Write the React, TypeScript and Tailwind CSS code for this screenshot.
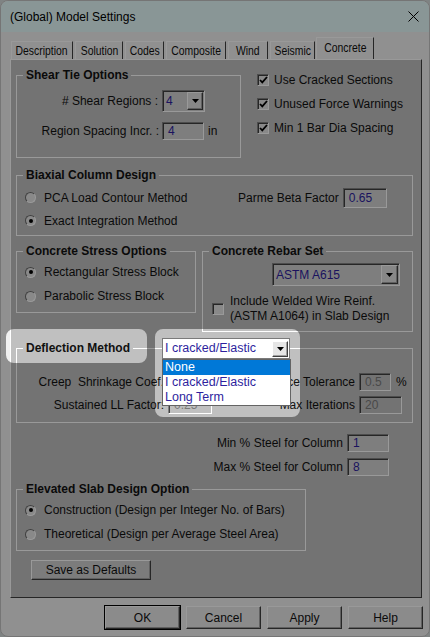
import React from "react";

const BLUE = "text-[#2e1f9e]";
const SUNKEN =
  "border border-t-[#808080] border-l-[#808080] border-r-white border-b-white shadow-[inset_1px_1px_0_#404040]";
const RAISED =
  "border border-t-white border-l-white border-r-[#404040] border-b-[#404040] shadow-[inset_-1px_-1px_0_#a0a0a0]";

const TABS = [
  { label: "Description", w: "w-[62px]" },
  { label: "Solution", w: "w-[48px]" },
  { label: "Codes", w: "w-[39px]" },
  { label: "Composite", w: "w-[60px]" },
  { label: "Wind", w: "w-[40px]" },
  { label: "Seismic", w: "w-[45px]" },
];

// rounded rect for the spotlight holes
const rr = (x: number, y: number, w: number, h: number, r: number) =>
  `M${x + r} ${y}H${x + w - r}A${r} ${r} 0 0 1 ${x + w} ${y + r}V${y + h - r}A${r} ${r} 0 0 1 ${x + w - r} ${y + h}H${x + r}A${r} ${r} 0 0 1 ${x} ${y + h - r}V${y + r}A${r} ${r} 0 0 1 ${x + r} ${y}Z`;

const Caret = () => (
  <svg width="7" height="4" viewBox="0 0 7 4">
    <path d="M0 0h7L3.5 4z" fill="#000" />
  </svg>
);

const Group = ({
  title,
  className = "",
  children,
}: {
  title: string;
  className?: string;
  children: React.ReactNode;
}) => (
  <fieldset className={`border border-white ${className}`}>
    <legend className="ml-[6px] px-[3px] text-[12px] font-bold leading-[14px]">{title}</legend>
    {children}
  </fieldset>
);

const Field = ({
  value,
  className = "",
  dim,
}: {
  value: string;
  className?: string;
  dim?: boolean;
}) => (
  <div
    className={`flex items-center pl-[5px] ${SUNKEN} ${
      dim ? "bg-[#c0c0c0] text-[#7a7a7a]" : `bg-[#d2d2d2] ${BLUE}`
    } ${className}`}
  >
    {value}
  </div>
);

const Check = ({ checked }: { checked?: boolean }) => (
  <span className={`flex h-[12px] w-[12px] shrink-0 items-center justify-center bg-[#e4e4e4] ${SUNKEN}`}>
    {checked && (
      <svg width="9" height="8" viewBox="0 0 9 8">
        <path d="M1 4l2.3 2.4L8 1" fill="none" stroke="#000" strokeWidth="1.8" />
      </svg>
    )}
  </span>
);

const RadioRow = ({
  label,
  checked,
  h = "h-[24px]",
}: {
  label: string;
  checked?: boolean;
  h?: string;
}) => (
  <div className={`flex items-center pl-[8px] ${h}`}>
    <span className="flex h-[11px] w-[11px] shrink-0 items-center justify-center rounded-full border border-t-[#6a6a6a] border-l-[#6a6a6a] border-r-white border-b-white bg-[#e4e4e4]">
      {checked && <span className="h-[4px] w-[4px] rounded-full bg-black" />}
    </span>
    <span className="ml-[8px] whitespace-nowrap">{label}</span>
  </div>
);

const CheckRow = ({ label }: { label: string }) => (
  <div className="flex h-[24px] items-center">
    <Check checked />
    <span className="ml-[5px] whitespace-nowrap">{label}</span>
  </div>
);

export default function App() {
  const holes = `M0 0H430V637H0Z${rr(6, 329, 141, 34, 8)}${rr(155, 329, 145, 88, 8)}`;

  return (
    <div className="relative h-[637px] w-[430px] overflow-hidden bg-[#d4dada] font-['Liberation_Sans',Arial,sans-serif] text-[12px] text-[#111]">
      <div className="flex h-full flex-col overflow-hidden rounded-[8px] border border-[#c4c4c4] bg-[#f0f0f0]">
        {/* title bar */}
        <div className="flex h-[31px] shrink-0 items-center justify-between bg-[#e5fbfb] pl-[9px] pr-[10px]">
          <span className="text-[12px] text-black">(Global) Model Settings</span>
          <svg width="11" height="11" viewBox="0 0 11 11">
            <path d="M0.5 0.5L10.5 10.5M10.5 0.5L0.5 10.5" stroke="#000" strokeWidth="1" />
          </svg>
        </div>

        {/* tabs */}
        <div className="mt-[5px] flex h-[22px] shrink-0 items-end gap-[2px] pl-[10px]">
          {TABS.map((t) => (
            <div
              key={t.label}
              className={`${t.w} flex h-[18px] items-center justify-center border-l border-t border-r border-l-white border-t-white border-r-[#404040] bg-[#f0f0f0]`}
            >
              <span className="inline-block scale-x-[0.8] whitespace-nowrap text-[13px]">{t.label}</span>
            </div>
          ))}
          <div className="relative -ml-[1px] flex h-[22px] w-[58px] items-center justify-center border-l border-t border-r border-l-white border-t-white border-r-[#404040] bg-[#f0f0f0] pb-[2px]">
            <span className="inline-block scale-x-[0.8] whitespace-nowrap text-[13px]">Concrete</span>
          </div>
        </div>

        {/* tab page */}
        <div className="ml-[9px] h-[539px] w-[412px] shrink-0 border border-t-white border-l-white border-r-[#404040] border-b-[#404040] bg-[#c0c0c0] pl-[5px] pt-[8px]">
          {/* shear tie + checkboxes */}
          <div className="flex items-start">
            <Group title="Shear Tie Options" className="h-[90px] w-[225px]">
              <div className="mt-[8px] flex h-[22px] items-center">
                <span className="w-[141px] text-right">#&nbsp;Shear Regions :</span>
                <div className={`ml-[4px] flex h-[22px] w-[43px] items-center justify-between bg-[#d2d2d2] pl-[3px] pr-[1px] ${SUNKEN}`}>
                  <span className={BLUE}>4</span>
                  <div className={`flex h-[18px] w-[16px] items-center justify-center bg-[#e2e2e2] ${RAISED}`}>
                    <Caret />
                  </div>
                </div>
              </div>
              <div className="mt-[10px] flex h-[18px] items-center">
                <span className="w-[142px] text-right">Region Spacing Incr. :</span>
                <Field className="ml-[3px] h-[18px] w-[42px]" value="4" />
                <span className="ml-[4px]">in</span>
              </div>
            </Group>
            <div className="ml-[16px] flex flex-col">
              <CheckRow label="Use Cracked Sections" />
              <CheckRow label="Unused Force Warnings" />
              <CheckRow label="Min 1 Bar Dia Spacing" />
            </div>
          </div>

          {/* biaxial */}
          <Group title="Biaxial Column Design" className="mt-[10px] w-[397px] pb-[3px]">
            <div className="flex pt-[4px]">
              <div className="w-[221px]">
                <RadioRow label="PCA Load Contour Method" h="h-[23px]" />
                <RadioRow label="Exact Integration Method" h="h-[23px]" checked />
              </div>
              <div className="flex h-[23px] items-center">
                <span className="whitespace-nowrap">Parme Beta Factor</span>
                <Field className="ml-[4px] h-[20px] w-[44px]" value="0.65" />
              </div>
            </div>
          </Group>

          {/* stress + rebar */}
          <div className="mt-[8px] flex items-start gap-[6px]">
            <Group title="Concrete Stress Options" className="h-[69px] w-[180px]">
              <div className="pt-[2px]">
                <RadioRow label="Rectangular Stress Block" checked />
                <RadioRow label="Parabolic Stress Block" />
              </div>
            </Group>
            <Group title="Concrete Rebar Set" className="h-[88px] w-[211px]">
              <div className={`ml-[69px] mt-[5px] flex h-[23px] w-[128px] items-center justify-between bg-[#d2d2d2] pl-[3px] pr-[1px] ${SUNKEN}`}>
                <span className={BLUE}>ASTM A615</span>
                <div className={`flex h-[19px] w-[17px] items-center justify-center bg-[#e2e2e2] ${RAISED}`}>
                  <Caret />
                </div>
              </div>
              <div className="mt-[8px] flex items-center pl-[9px]">
                <Check />
                <span className="ml-[6px] leading-[15px]">
                  Include Welded Wire Reinf.
                  <br />
                  (ASTM A1064) in Slab Design
                </span>
              </div>
            </Group>
          </div>

          {/* deflection */}
          <div className="relative mt-[9px] w-[397px]">
            <Group title="Deflection Method" className="w-[397px] pb-[8px]">
              <div className="mt-[18px] flex h-[18px] items-center">
                <span className="w-[147px] whitespace-pre text-right">Creep  Shrinkage Coef.</span>
                <Field dim className="ml-[4px] h-[18px] w-[44px]" value="" />
                <span className="w-[143px] whitespace-nowrap text-right">Convergence Tolerance</span>
                <Field dim className="ml-[4px] h-[18px] w-[32px]" value="0.5" />
                <span className="ml-[5px]">%</span>
              </div>
              <div className="mt-[5px] flex h-[18px] items-center">
                <span className="w-[147px] text-right">Sustained LL Factor:</span>
                <Field dim className="ml-[4px] h-[18px] w-[44px]" value="0.25" />
                <span className="w-[143px] text-right">Max Iterations</span>
                <Field dim className="ml-[4px] h-[18px] w-[43px]" value="20" />
              </div>
            </Group>

            {/* open combo box */}
            <div className="absolute left-[146px] top-[-3px] z-30 flex h-[21px] w-[128px] items-center justify-between border border-[#7a7a7a] bg-white pl-[2px] pr-[1px] text-[12.5px]">
              <span className={BLUE}>I cracked/Elastic</span>
              <div className={`flex h-[16px] w-[16px] items-center justify-center bg-[#e6e6e6] ${RAISED}`}>
                <Caret />
              </div>
            </div>
            <div className="absolute left-[146px] top-[18px] z-30 w-[129px] border border-[#646464] bg-white text-[12.5px]">
              <div className="h-[15px] bg-[#0078d7] pl-[2px] leading-[15px] text-white">None</div>
              <div className={`h-[15px] pl-[2px] leading-[15px] ${BLUE}`}>I cracked/Elastic</div>
              <div className={`h-[15px] pl-[2px] leading-[15px] ${BLUE}`}>Long Term</div>
            </div>
          </div>

          {/* steel limits */}
          <div className="mt-[11px] flex h-[18px] items-center justify-end pr-[32px]">
            <span>Min % Steel for Column</span>
            <Field className="ml-[4px] h-[18px] w-[42px]" value="1" />
          </div>
          <div className="mt-[6px] flex h-[18px] items-center justify-end pr-[32px]">
            <span>Max % Steel for Column</span>
            <Field className="ml-[4px] h-[18px] w-[42px]" value="8" />
          </div>

          {/* elevated slab */}
          <Group title="Elevated Slab Design Option" className="mt-[6px] h-[69px] w-[290px]">
            <div className="pt-[2px]">
              <RadioRow label="Construction (Design per Integer No. of Bars)" checked />
              <RadioRow label="Theoretical (Design per Average Steel Area)" />
            </div>
          </Group>

          <button className={`ml-[15px] mt-[9px] flex h-[20px] w-[120px] items-center justify-center bg-[#cfcfcf] ${RAISED}`}>
            Save as Defaults
          </button>
        </div>

        {/* dialog buttons */}
        <div className="mt-[8px] flex justify-end gap-[6px] pr-[6px]">
          <button className={`flex h-[23px] w-[75px] items-center justify-center bg-[#e8e8e8] outline outline-1 outline-black ${RAISED}`}>
            OK
          </button>
          <button className={`flex h-[23px] w-[75px] items-center justify-center bg-[#e8e8e8] ${RAISED}`}>Cancel</button>
          <button className={`flex h-[23px] w-[75px] items-center justify-center bg-[#e8e8e8] ${RAISED}`}>Apply</button>
          <button className={`flex h-[23px] w-[75px] items-center justify-center bg-[#e8e8e8] ${RAISED}`}>Help</button>
        </div>
      </div>

      {/* dim overlay with spotlight holes */}
      <svg className="pointer-events-none absolute inset-0 z-20" width="430" height="637" viewBox="0 0 430 637">
        <path d={holes} fill="#000" fillOpacity="0.4" fillRule="evenodd" />
      </svg>
    </div>
  );
}
